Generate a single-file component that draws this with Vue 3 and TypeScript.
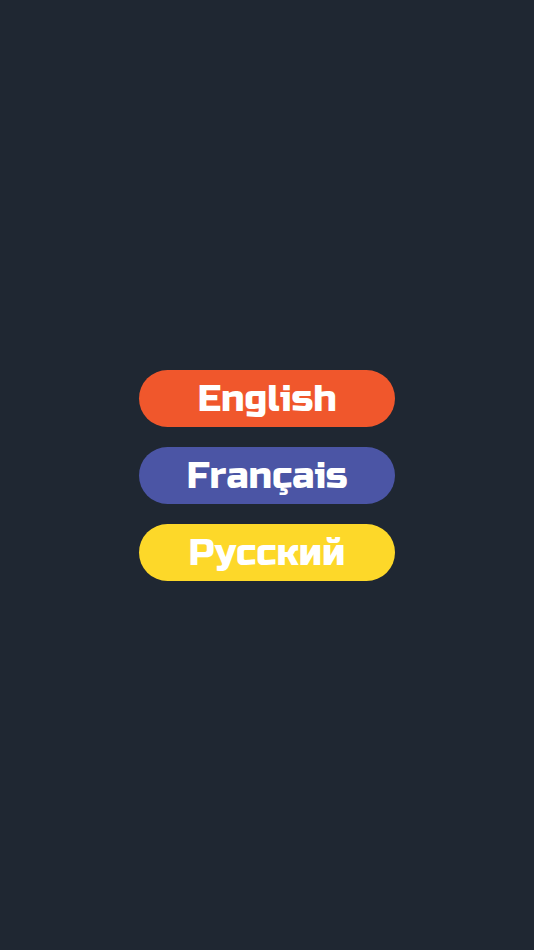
<script setup lang="ts">
interface Language {
  code: string
  label: string
}

const languages: Language[] = [
  { code: 'en', label: 'English' },
  { code: 'fr', label: 'Français' },
  { code: 'ru', label: 'Русский' },
]
</script>

<template>
  <main class="screen">
    <nav class="languages">
      <button
        v-for="language in languages"
        :key="language.code"
        type="button"
        class="language"
        :class="language.code"
        :lang="language.code"
      >
        {{ language.label }}
      </button>
    </nav>
  </main>
</template>

<style>
body {
  background: #1f2732;
}
</style>

<style scoped>
.screen {
  display: flex;
  align-items: center;
  justify-content: center;
  min-height: 100vh;
  background: #1f2732;
}

.languages {
  display: flex;
  flex-direction: column;
  gap: 20px;
  width: 48%;
}

.language {
  padding: 2px 16px 0;
  border: 0;
  border-radius: 999px;
  color: #fff;
  font-family: "Russo One", "DejaVu Sans", sans-serif;
  font-size: 37px;
  font-weight: 400;
  font-kerning: none;
  line-height: 55px;
  cursor: pointer;
}

.en {
  background: #f0572c;
}

.fr {
  background: #4b55a5;
}

.ru {
  background: #fdd829;
}
</style>
